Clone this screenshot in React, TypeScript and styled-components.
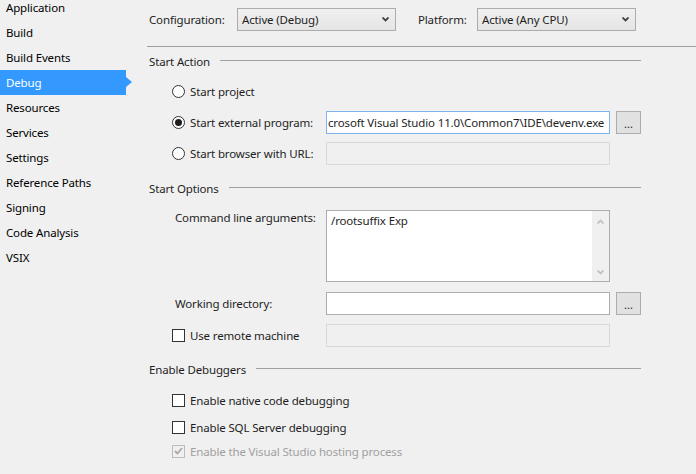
import React from "react";
import styled, { createGlobalStyle } from "styled-components";

const Global = createGlobalStyle`
  html, body { margin: 0; padding: 0; background: #f0f0f0; }
  body { font-family: "Noto Sans", "Open Sans", sans-serif; font-size: 11.5px; letter-spacing: -0.15px; color: #1e1e1e; }
  * { box-sizing: border-box; }
`;

const Page = styled.div`
  display: flex;
  width: 696px;
  height: 474px;
  overflow: hidden;
  background: #f0f0f0;
`;

const Sidebar = styled.nav`
  width: 140px;
  flex: none;
  display: flex;
  flex-direction: column;
  margin-top: -5px;
`;

const NavItem = styled.div<{ $active?: boolean }>`
  position: relative;
  height: 25px;
  width: 126px;
  display: flex;
  align-items: center;
  padding-left: 6px;
  color: ${(p) => (p.$active ? "#ffffff" : "#000000")};
  background: ${(p) => (p.$active ? "#3399ff" : "transparent")};
  &::after {
    content: "";
    display: ${(p) => (p.$active ? "block" : "none")};
    position: absolute;
    right: -6px;
    top: 7px;
    border-top: 5px solid transparent;
    border-bottom: 5px solid transparent;
    border-left: 6px solid #3399ff;
  }
`;

const Main = styled.main`
  flex: 1;
  display: flex;
  flex-direction: column;
  padding-top: 8px;
  padding-left: 9px;
`;

const TopRow = styled.div`
  display: flex;
  align-items: center;
  height: 23px;
`;

const TopLabel = styled.span<{ $w: number }>`
  width: ${(p) => p.$w}px;
  flex: none;
  white-space: nowrap;
`;

const Select = styled.div`
  width: 159px;
  height: 23px;
  flex: none;
  border: 1px solid #acacac;
  background: linear-gradient(#f0f0f0, #e5e5e5);
  display: flex;
  align-items: center;
  justify-content: space-between;
  padding: 0 6px 0 4px;
  margin-right: 22px;
`;

const Divider = styled.div`
  height: 1px;
  background: #a0a0a0;
  margin: 15px 0 0 -2px;
`;

const Section = styled.section`
  width: 492px;
  display: flex;
  flex-direction: column;
`;

const SectionHeader = styled.div<{ $top: number }>`
  display: flex;
  align-items: center;
  height: 20px;
  margin-top: ${(p) => p.$top}px;
  gap: 10px;
  &::after {
    content: "";
    flex: 1;
    height: 1px;
    background: #a0a0a0;
    margin-top: -1px;
  }
`;

const Row = styled.div<{ $top: number; $h?: number }>`
  display: flex;
  align-items: center;
  margin-top: ${(p) => p.$top}px;
  height: ${(p) => p.$h ?? 23}px;
  padding-left: 23px;
`;

const OptionLabel = styled.label<{ $disabled?: boolean }>`
  display: flex;
  align-items: center;
  gap: 5px;
  width: 154px;
  flex: none;
  white-space: nowrap;
  color: ${(p) => (p.$disabled ? "#a0a0a0" : "#1e1e1e")};
`;

const FieldLabel = styled.span`
  width: 154px;
  padding-left: 3px;
  flex: none;
  white-space: nowrap;
`;

const Radio = styled.span<{ $checked?: boolean }>`
  width: 13px;
  height: 13px;
  flex: none;
  border-radius: 50%;
  border: 1px solid #333333;
  background: #ffffff;
  display: flex;
  align-items: center;
  justify-content: center;
  &::after {
    content: "";
    display: ${(p) => (p.$checked ? "block" : "none")};
    width: 7px;
    height: 7px;
    border-radius: 50%;
    background: #1e1e1e;
  }
`;

const Check = styled.span<{ $disabled?: boolean }>`
  width: 13px;
  height: 13px;
  flex: none;
  border: 1px solid ${(p) => (p.$disabled ? "#bcbcbc" : "#333333")};
  background: ${(p) => (p.$disabled ? "#f0f0f0" : "#ffffff")};
  display: flex;
  align-items: center;
  justify-content: center;
`;

const TextBox = styled.div<{ $variant?: "focus" | "normal" | "disabled" }>`
  width: 284px;
  height: 23px;
  flex: none;
  display: flex;
  align-items: center;
  overflow: hidden;
  white-space: nowrap;
  padding: 0 3px 0 1px;
  background: ${(p) => (p.$variant === "disabled" ? "#f0f0f0" : "#ffffff")};
  border: 1px solid
    ${(p) =>
      p.$variant === "focus" ? "#7eb4ea" : p.$variant === "disabled" ? "#d9d9d9" : "#abadb3"};
`;

const Browse = styled.button`
  width: 25px;
  height: 23px;
  flex: none;
  margin-left: 6px;
  border: 1px solid #adadad;
  background: #e1e1e1;
  font: inherit;
  font-size: 11px;
  line-height: 1;
  color: #1e1e1e;
  padding: 0 0 4px;
  display: flex;
  align-items: flex-end;
  justify-content: center;
`;

const Area = styled.div`
  width: 284px;
  height: 72px;
  flex: none;
  border: 1px solid #abadb3;
  background: #ffffff;
  display: flex;
`;

const AreaText = styled.div`
  flex: 1;
  padding: 2px 4px;
`;

const ScrollBar = styled.div`
  width: 17px;
  background: #f0f0f0;
  display: flex;
  flex-direction: column;
  justify-content: space-between;
  align-items: center;
  padding: 8px 0 6px;
`;

const TopAlignedRow = styled(Row)`
  align-items: flex-start;
`;

const TopFieldLabel = styled(FieldLabel)`
  line-height: 15px;
`;

const Chevron = ({ up, color, w = 7 }: { up?: boolean; color: string; w?: number }) => (
  <svg width={w} height={5} viewBox="0 0 7 5">
    <path
      d={up ? "M0.5 4.5 L3.5 1.5 L6.5 4.5" : "M0.5 0.5 L3.5 3.5 L6.5 0.5"}
      fill="none"
      stroke={color}
      strokeWidth={1.8}
    />
  </svg>
);

const CheckMark = () => (
  <svg width="9" height="8" viewBox="0 0 9 8">
    <path d="M1 4 L3.5 6.5 L8 1" fill="none" stroke="#a8a8a8" strokeWidth={1.8} />
  </svg>
);

const navItems = [
  "Application",
  "Build",
  "Build Events",
  "Debug",
  "Resources",
  "Services",
  "Settings",
  "Reference Paths",
  "Signing",
  "Code Analysis",
  "VSIX",
];

export default function App() {
  return (
    <Page>
      <Global />
      <Sidebar>
        {navItems.map((n) => (
          <NavItem key={n} $active={n === "Debug"}>
            {n}
          </NavItem>
        ))}
      </Sidebar>
      <Main>
        <TopRow>
          <TopLabel $w={88}>Configuration:</TopLabel>
          <Select>
            <span>Active (Debug)</span>
            <Chevron color="#404040" />
          </Select>
          <TopLabel $w={59}>Platform:</TopLabel>
          <Select>
            <span>Active (Any CPU)</span>
            <Chevron color="#404040" />
          </Select>
        </TopRow>
        <Divider />
        <Section>
          <SectionHeader $top={4}>Start Action</SectionHeader>
          <Row $top={9}>
            <OptionLabel>
              <Radio />
              Start project
            </OptionLabel>
          </Row>
          <Row $top={8}>
            <OptionLabel>
              <Radio $checked />
              Start external program:
            </OptionLabel>
            <TextBox $variant="focus">crosoft Visual Studio 11.0\Common7\IDE\devenv.exe</TextBox>
            <Browse>...</Browse>
          </Row>
          <Row $top={8}>
            <OptionLabel>
              <Radio />
              Start browser with URL:
            </OptionLabel>
            <TextBox $variant="disabled" />
          </Row>

          <SectionHeader $top={13}>Start Options</SectionHeader>
          <TopAlignedRow $top={12} $h={72}>
            <TopFieldLabel>Command line arguments:</TopFieldLabel>
            <Area>
              <AreaText>/rootsuffix Exp</AreaText>
              <ScrollBar>
                <Chevron up color="#c2c2c2" />
                <Chevron color="#c2c2c2" />
              </ScrollBar>
            </Area>
          </TopAlignedRow>
          <Row $top={10}>
            <FieldLabel>Working directory:</FieldLabel>
            <TextBox $variant="normal" />
            <Browse>...</Browse>
          </Row>
          <Row $top={9}>
            <OptionLabel>
              <Check />
              Use remote machine
            </OptionLabel>
            <TextBox $variant="disabled" />
          </Row>

          <SectionHeader $top={12}>Enable Debuggers</SectionHeader>
          <Row $top={11} $h={20}>
            <OptionLabel>
              <Check />
              Enable native code debugging
            </OptionLabel>
          </Row>
          <Row $top={7} $h={20}>
            <OptionLabel>
              <Check />
              Enable SQL Server debugging
            </OptionLabel>
          </Row>
          <Row $top={4} $h={20}>
            <OptionLabel $disabled>
              <Check $disabled>
                <CheckMark />
              </Check>
              Enable the Visual Studio hosting process
            </OptionLabel>
          </Row>
        </Section>
      </Main>
    </Page>
  );
}
